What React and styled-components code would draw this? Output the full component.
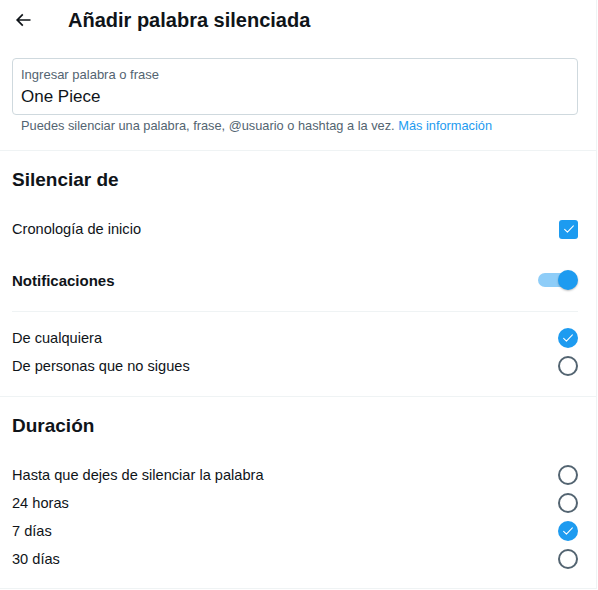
import styled, { createGlobalStyle } from "styled-components";

const Global = createGlobalStyle`
  body {
    margin: 0;
    background: #fff;
    font-family: "Liberation Sans", Arial, sans-serif;
    color: #0f1419;
  }
`;

const Page = styled.div`
  width: 596px;
  height: 588px;
  border-right: 1px solid #eff3f4;
  border-bottom: 1px solid #eff3f4;
  overflow: hidden;
`;

const Header = styled.div`
  height: 40px;
  display: flex;
  align-items: center;
  padding: 0 12px;
`;

const BackButton = styled.div`
  width: 20px;
  height: 20px;
  display: flex;
  align-items: center;
  justify-content: center;
  margin-left: 1px;
  margin-right: 35px;
`;

const Title = styled.h1`
  margin: 0;
  font-size: 20px;
  font-weight: 700;
`;

const InputSection = styled.div`
  padding: 18px 18px 17px 12px;
  border-bottom: 1px solid #eff3f4;
`;

const InputBox = styled.div`
  height: 55px;
  border: 1px solid #cfd9de;
  border-radius: 4px;
  padding: 0 8px;
  display: flex;
  flex-direction: column;
  justify-content: center;
  gap: 5px;
`;

const InputLabel = styled.div`
  font-size: 13px;
  color: #536471;
`;

const InputValue = styled.div`
  font-size: 17px;
`;

const Hint = styled.div`
  margin-top: 3px;
  padding-left: 9px;
  font-size: 12.8px;
  color: #536471;
`;

const Link = styled.span`
  color: #1d9bf0;
`;

const Section = styled.div`
  padding: 0 18px ${(p) => p.$pb || 0}px 12px;
  border-bottom: ${(p) => (p.$last ? "none" : "1px solid #eff3f4")};
`;

const Heading = styled.h2`
  margin: 0;
  height: 58px;
  display: flex;
  align-items: center;
  font-size: 19px;
  font-weight: 700;
`;

const Row = styled.div`
  height: ${(p) => p.$h || 28}px;
  display: flex;
  align-items: center;
  justify-content: space-between;
  font-size: ${(p) => (p.$bold ? 15 : 14.6)}px;
  font-weight: ${(p) => (p.$bold ? 700 : 400)};
`;

const Divider = styled.div`
  height: 1px;
  background: #eff3f4;
  margin-bottom: 12px;
`;

const Spacer = styled.div`
  height: ${(p) => p.$h}px;
`;

const Checkbox = styled.div`
  width: 19px;
  height: 19px;
  border-radius: 3px;
  background: #1d9bf0;
  display: flex;
  align-items: center;
  justify-content: center;
`;

const Radio = styled.div`
  width: 20px;
  height: 20px;
  box-sizing: border-box;
  border-radius: 50%;
  border: ${(p) => (p.$on ? "none" : "2px solid #536471")};
  background: ${(p) => (p.$on ? "#1d9bf0" : "transparent")};
  display: flex;
  align-items: center;
  justify-content: center;
`;

const Toggle = styled.div`
  position: relative;
  width: 40px;
  height: 20px;
  display: flex;
  align-items: center;
`;

const Track = styled.div`
  width: 34px;
  height: 14px;
  border-radius: 7px;
  background: #8ecdf8;
`;

const Thumb = styled.div`
  position: absolute;
  right: 0;
  top: 0;
  width: 20px;
  height: 20px;
  border-radius: 50%;
  background: #1d9bf0;
  box-shadow: 0 1px 2px rgba(0, 0, 0, 0.25);
`;

const Tick = () => (
  <svg width="14" height="14" viewBox="0 0 24 24" fill="none">
    <path d="M4.5 12.5l4.8 4.8L19.5 6.5" stroke="#fff" strokeWidth="1.8" strokeLinecap="round" strokeLinejoin="round" />
  </svg>
);

const ArrowLeft = () => (
  <svg width="20" height="20" viewBox="0 0 24 24">
    <path
      d="M7.414 13l5.043 5.04-1.414 1.42L3.586 12l7.457-7.46 1.414 1.42L7.414 11H21v2H7.414z"
      fill="#0f1419"
    />
  </svg>
);

const Mark = ({ kind, on }) =>
  kind === "check" ? (
    <Checkbox>
      <Tick />
    </Checkbox>
  ) : (
    <Radio $on={on}>{on && <Tick />}</Radio>
  );

const durations = [
  { label: "Hasta que dejes de silenciar la palabra", on: false },
  { label: "24 horas", on: false },
  { label: "7 días", on: true },
  { label: "30 días", on: false },
];

export default function App() {
  return (
    <Page>
      <Global />
      <Header>
        <BackButton>
          <ArrowLeft />
        </BackButton>
        <Title>Añadir palabra silenciada</Title>
      </Header>

      <InputSection>
        <InputBox>
          <InputLabel>Ingresar palabra o frase</InputLabel>
          <InputValue>One Piece</InputValue>
        </InputBox>
        <Hint>
          Puedes silenciar una palabra, frase, @usuario o hashtag a la vez. <Link>Más información</Link>
        </Hint>
      </InputSection>

      <Section $pb={16}>
        <Heading>Silenciar de</Heading>
        <Row $h={40}>
          Cronología de inicio
          <Mark kind="check" />
        </Row>
        <Row $h={62} $bold>
          Notificaciones
          <Toggle>
            <Track />
            <Thumb />
          </Toggle>
        </Row>
        <Divider />
        <Row>
          De cualquiera
          <Mark on />
        </Row>
        <Row>
          De personas que no sigues
          <Mark />
        </Row>
      </Section>

      <Section $last>
        <Heading>Duración</Heading>
        <Spacer $h={6} />
        {durations.map((d) => (
          <Row key={d.label}>
            {d.label}
            <Mark on={d.on} />
          </Row>
        ))}
      </Section>
    </Page>
  );
}
